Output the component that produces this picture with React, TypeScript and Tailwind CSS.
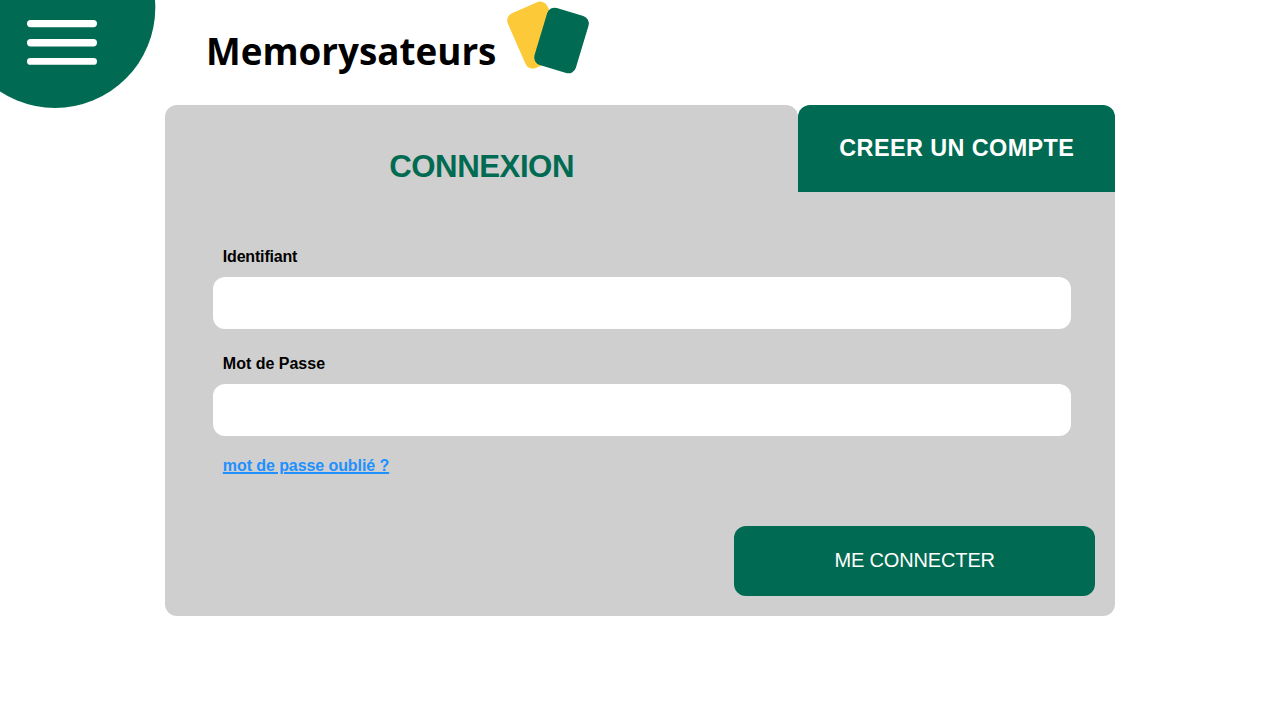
import React from "react";

function MenuButton() {
  return (
    <button aria-label="Menu" className="block h-[108px] w-[165px] shrink-0">
      <svg width="165" height="108" viewBox="0 0 165 108">
        <circle cx="55" cy="7.7" r="100.3" fill="#006b52" />
        <rect x="27" y="20" width="70" height="7.2" rx="3.6" fill="#fff" />
        <rect x="27" y="39" width="70" height="7.4" rx="3.6" fill="#fff" />
        <rect x="27" y="58" width="70" height="6.8" rx="3.4" fill="#fff" />
      </svg>
    </button>
  );
}

function Logo() {
  return (
    <div className="flex items-start pl-[41px]">
      <span className="w-[300px] whitespace-nowrap pt-[26px] font-['Open_Sans','Noto_Sans',sans-serif] text-[36.8px] leading-[51px] font-bold text-black">
        Memorysateurs
      </span>
      <svg width="86" height="76" viewBox="506 0 86 76">
        <rect x="514.9" y="5.3" width="43.2" height="59.6" rx="7.8" fill="#fcca38" transform="rotate(-23.7 536.5 35.1)" />
        <rect x="539.9" y="10.7" width="43.2" height="59.6" rx="7.8" fill="#006b52" transform="rotate(16.7 561.5 40.5)" />
      </svg>
    </div>
  );
}

function Field({ label, type, name, labelClass }: { label: string; type: string; name: string; labelClass?: string }) {
  return (
    <label className="block">
      <span className={`block pl-[10px] text-[16px] leading-[18px] font-bold text-black ${labelClass ?? ""}`}>{label}</span>
      <input name={name} type={type} className="mt-[11px] block h-[52px] w-[858.5px] rounded-[12px] bg-white px-4 outline-none" />
    </label>
  );
}

export default function App() {
  return (
    <div className="h-[720px] w-[1280px] overflow-hidden bg-white font-['Liberation_Sans',Arial,sans-serif]">
      <header className="flex h-[104.7px]">
        <MenuButton />
        <Logo />
      </header>
      <main className="ml-[164.8px] w-[950.4px]">
        <div className="flex h-[87.3px] bg-[linear-gradient(#cfcfcf,#cfcfcf)] bg-[length:100%_50%] bg-bottom bg-no-repeat">
          <h1 className="w-[633.6px] rounded-t-[12px] bg-[#cfcfcf] pt-[43px] text-center text-[31.2px] leading-[37px] font-bold tracking-[-0.45px] text-[#006b52]">
            CONNEXION
          </h1>
          <button className="block w-[316.8px] rounded-t-[12px] bg-[#006b52] text-center text-[23.4px] leading-[86px] font-bold tracking-[0.42px] text-white">
            CREER UN COMPTE
          </button>
        </div>
        <form className="h-[424px] rounded-b-[12px] bg-[#cfcfcf] pt-[56px] pl-[48px]">
          <Field label="Identifiant" type="text" name="login" labelClass="tracking-[-0.18px]" />
          <div className="h-[26px]" />
          <Field label="Mot de Passe" type="password" name="password" />
          <a href="#" className="mt-[21px] ml-[10px] block w-fit text-[16px] leading-[18px] font-bold tracking-[-0.08px] text-[#1e90ff] underline decoration-[1.6px]">
            mot de passe oublié ?
          </a>
          <div className="mt-[50.6px] flex justify-end pr-[20px]">
            <button type="button" className="h-[70.4px] w-[361px] rounded-[12px] bg-[#006b52] pb-[1px] text-[20px] tracking-[-0.15px] text-white">
              ME CONNECTER
            </button>
          </div>
        </form>
      </main>
    </div>
  );
}
